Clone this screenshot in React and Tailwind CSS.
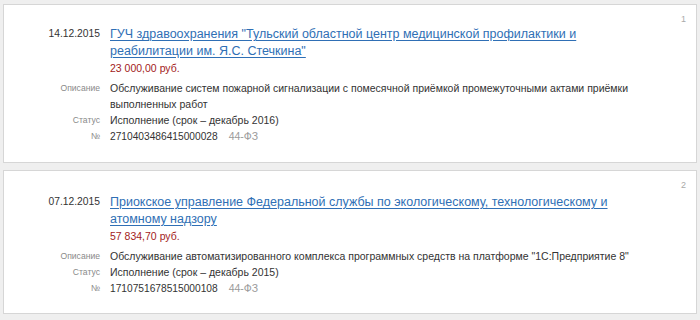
import React from "react";

const items = [
  {
    n: "1",
    date: "14.12.2015",
    title: "ГУЧ здравоохранения \"Тульский областной центр медицинской профилактики и реабилитации им. Я.С. Стечкина\"",
    price: "23 000,00 руб.",
    desc: "Обслуживание систем пожарной сигнализации с помесячной приёмкой промежуточными актами приёмки выполненных работ",
    status: "Исполнение (срок – декабрь 2016)",
    num: "2710403486415000028",
  },
  {
    n: "2",
    date: "07.12.2015",
    title: "Приокское управление Федеральной службы по экологическому, технологическому и атомному надзору",
    price: "57 834,70 руб.",
    desc: "Обслуживание автоматизированного комплекса программных средств на платформе \"1С:Предприятие 8\"",
    status: "Исполнение (срок – декабрь 2015)",
    num: "1710751678515000108",
  },
];

function Card({ it, cls }) {
  return (
    <div className={`relative bg-white border border-[#d6d6d6] ${cls}`}>
      <div className="absolute right-[10px] top-[8px] text-[9px] text-[#aaaaaa]">{it.n}</div>
      <div className="grid grid-cols-[96px_1fr] gap-x-[10px] text-[10.5px] leading-[16px] text-[#333333]">
        <div className="text-right text-[#333333] text-[10.3px]">{it.date}</div>
        <div>
          <a href="#" className="text-[12.5px] leading-[16.5px] text-[#2f6fb5] underline underline-offset-[2px] decoration-[#2f6fb5] max-w-[530px] block">
            {it.title}
          </a>
          <div className="text-[#a31b1b] mt-[1px]">{it.price}</div>
        </div>
        <div className="text-right text-[8.6px] text-[#8a8a8a] mt-[4px]">Описание</div>
        <div className="mt-[4px] pr-[40px]">{it.desc}</div>
        <div className="text-right text-[8.6px] text-[#8a8a8a]">Статус</div>
        <div>{it.status}</div>
        <div className="text-right text-[8.6px] text-[#8a8a8a]">№</div>
        <div className="text-[10.2px]">
          {it.num}
          <span className="ml-[11px] text-[#9a9a9a] text-[10.5px]">44-ФЗ</span>
        </div>
      </div>
    </div>
  );
}

export default function App() {
  return (
    <div className="w-[700px] h-[320px] bg-[#efefef] pt-[4px] px-[3px] flex flex-col gap-[7px] font-['Liberation_Sans',Arial,sans-serif]">
      <Card it={items[0]} cls="h-[159px] pt-[21px]" />
      <Card it={items[1]} cls="h-[144px] pt-[23px]" />
    </div>
  );
}
